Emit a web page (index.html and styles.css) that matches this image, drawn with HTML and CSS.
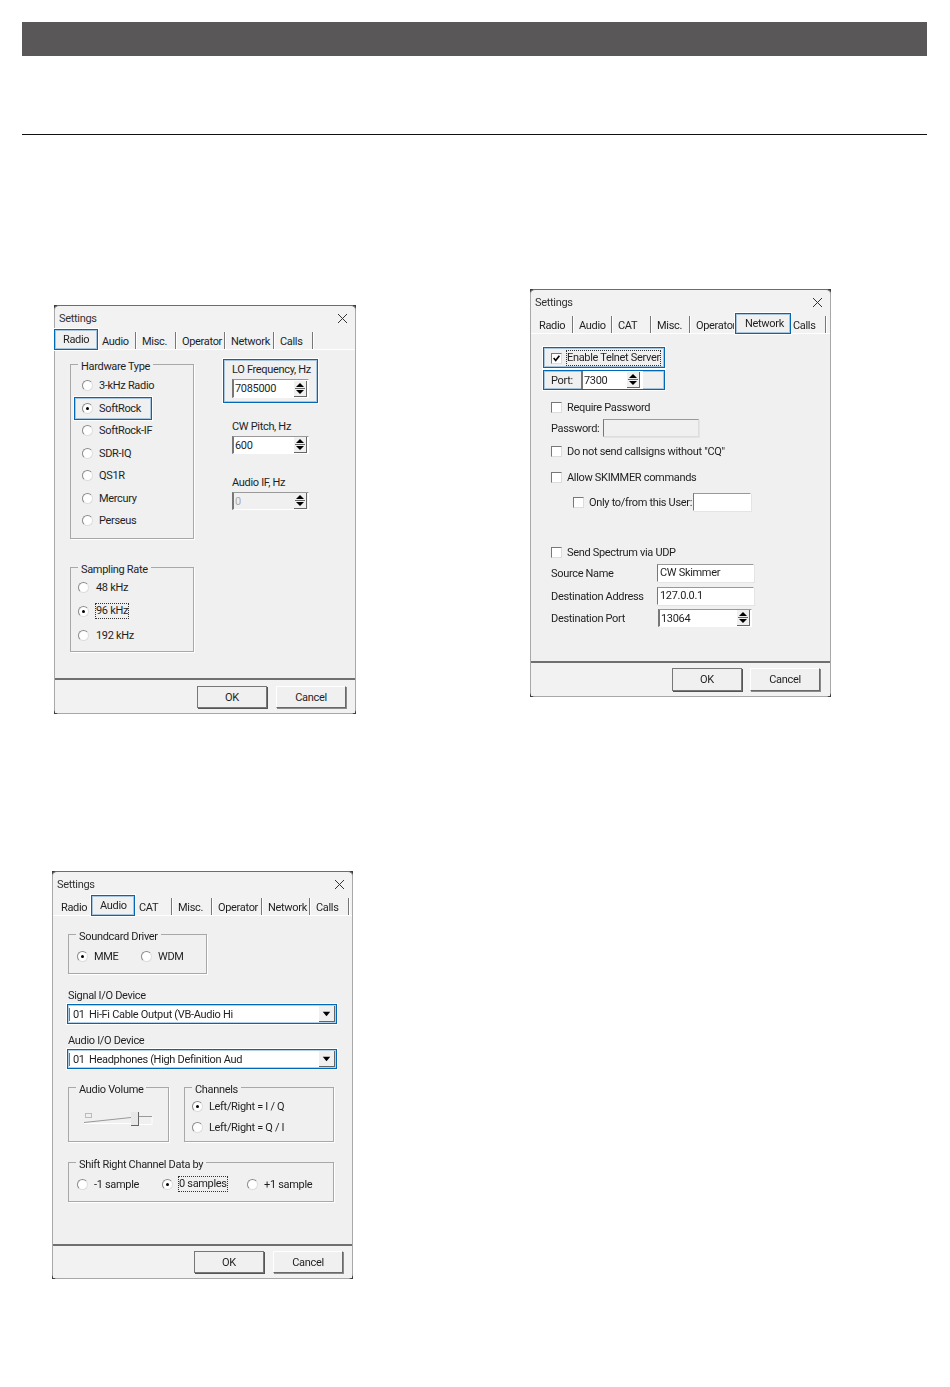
FILE: index.html
```html
<!DOCTYPE html>
<html lang="en">
<head>
    <meta charset="UTF-8">
    <meta name="viewport" content="width=device-width, initial-scale=1.0">
    <title>CW Skimmer Settings</title>
    <link rel="stylesheet" href="styles.css">
</head>
<body>
<svg class="defs" aria-hidden="true">
    <symbol id="updown" viewBox="0 0 12 14">
        <path d="M6 1.5 L10 5.5 H2 Z M2 8.5 H10 L6 12.5 Z" fill="#000"/>
        <path d="M1 7 H11" stroke="#666" stroke-width="1"/>
    </symbol>
    <symbol id="close" viewBox="0 0 11 11">
        <path d="M1 1 L10 10 M10 1 L1 10" stroke="#333" stroke-width="1" fill="none"/>
    </symbol>
    <symbol id="down" viewBox="0 0 16 16">
        <path d="M4 6 H12 L8 11 Z" fill="#000"/>
    </symbol>
</svg>

<div class="page">
    <div class="top-bar"></div>
    <hr class="top-rule">

    <div class="sheets">
        <div class="col">
            <!-- Radio tab -->
            <div class="dialog dialog-radio">
                <div class="dialog-in">
                    <div class="titlebar"><span>Settings</span><svg class="close"><use href="#close"/></svg></div>
                    <div class="tabs tabs-radio">
                        <div class="tab tab-on">Radio</div>
                        <div class="tab tab-next">Audio</div>
                        <div class="tab">Misc.</div>
                        <div class="tab">Operator</div>
                        <div class="tab">Network</div>
                        <div class="tab">Calls</div>
                    </div>
                    <div class="panel panel-radio">
                        <div class="radio-left">
                            <div class="group group-hw">
                                <span class="group-title">Hardware Type</span>
                                <div class="opt"><span class="radio"></span>3-kHz Radio</div>
                                <div class="opt opt-mark"><span class="radio radio-on"></span>SoftRock</div>
                                <div class="opt"><span class="radio"></span>SoftRock-IF</div>
                                <div class="opt"><span class="radio"></span>SDR-IQ</div>
                                <div class="opt"><span class="radio"></span>QS1R</div>
                                <div class="opt"><span class="radio"></span>Mercury</div>
                                <div class="opt"><span class="radio"></span>Perseus</div>
                            </div>
                            <div class="group group-rate">
                                <span class="group-title">Sampling Rate</span>
                                <div class="opt"><span class="radio"></span>48 kHz</div>
                                <div class="opt"><span class="radio radio-on"></span><span class="focus">96 kHz</span></div>
                                <div class="opt"><span class="radio"></span>192 kHz</div>
                            </div>
                        </div>
                        <div class="radio-right">
                            <div class="lo-box">
                                <div class="field-label">LO Frequency, Hz</div>
                                <div class="spin"><span class="spin-val">7085000</span><svg class="spin-btn"><use href="#updown"/></svg></div>
                            </div>
                            <div class="field">
                                <div class="field-label">CW Pitch, Hz</div>
                                <div class="spin spin-short"><span class="spin-val">600</span><svg class="spin-btn"><use href="#updown"/></svg></div>
                            </div>
                            <div class="field field-if">
                                <div class="field-label">Audio IF, Hz</div>
                                <div class="spin spin-short spin-off"><span class="spin-val">0</span><svg class="spin-btn"><use href="#updown"/></svg></div>
                            </div>
                        </div>
                    </div>
                    <div class="foot">
                        <button class="btn btn-default">OK</button>
                        <button class="btn">Cancel</button>
                    </div>
                </div>
            </div>

            <!-- Audio tab -->
            <div class="dialog dialog-audio">
                <div class="dialog-in">
                    <div class="titlebar"><span>Settings</span><svg class="close"><use href="#close"/></svg></div>
                    <div class="tabs tabs-audio">
                        <div class="tab tab-first tab-plain">Radio</div>
                        <div class="tab tab-on">Audio</div>
                        <div class="tab tab-next">CAT</div>
                        <div class="tab">Misc.</div>
                        <div class="tab">Operator</div>
                        <div class="tab">Network</div>
                        <div class="tab">Calls</div>
                    </div>
                    <div class="panel panel-audio">
                        <div class="group group-driver">
                            <span class="group-title">Soundcard Driver</span>
                            <div class="opt opt-wide"><span class="radio radio-on"></span>MME</div>
                            <div class="opt"><span class="radio"></span>WDM</div>
                        </div>
                        <div class="combo-label combo-label-first">Signal I/O Device</div>
                        <div class="combo"><span class="combo-num">01</span><span class="combo-text">Hi-Fi Cable Output (VB-Audio Hi</span><svg class="combo-btn"><use href="#down"/></svg></div>
                        <div class="combo-label">Audio I/O Device</div>
                        <div class="combo"><span class="combo-num">01</span><span class="combo-text">Headphones (High Definition Aud</span><svg class="combo-btn"><use href="#down"/></svg></div>
                        <div class="audio-row">
                            <div class="group group-volume">
                                <span class="group-title">Audio Volume</span>
                                <svg class="slider" viewBox="0 0 70 16">
                                    <path d="M0 11.5 L47 6.5" stroke="#999" fill="none"/>
                                    <path d="M54 5.5 H68 V13.5 H54" stroke="#fff" fill="none"/>
                                    <path d="M54 5.5 H68" stroke="#999" fill="none"/>
                                    <path d="M0 12.5 H47" stroke="#fff" fill="none"/>
                                    <rect x="1.5" y="2.5" width="6" height="4" fill="none" stroke="#bbb"/>
                                    <rect x="47" y="1" width="7" height="14" fill="#e8e8e8"/>
                                    <path d="M47 14.5 H54.5 M54.5 1 V15" stroke="#666" fill="none"/>
                                </svg>
                            </div>
                            <div class="group group-channels">
                                <span class="group-title">Channels</span>
                                <div class="opt"><span class="radio radio-on"></span>Left/Right = I / Q</div>
                                <div class="opt"><span class="radio"></span>Left/Right = Q / I</div>
                            </div>
                        </div>
                        <div class="group group-shift">
                            <span class="group-title">Shift Right Channel Data by</span>
                            <div class="opt opt-shift"><span class="radio"></span>-1 sample</div>
                            <div class="opt opt-shift"><span class="radio radio-on"></span><span class="focus">0 samples</span></div>
                            <div class="opt opt-shift"><span class="radio"></span>+1 sample</div>
                        </div>
                    </div>
                    <div class="foot foot-short">
                        <button class="btn btn-default">OK</button>
                        <button class="btn">Cancel</button>
                    </div>
                </div>
            </div>
        </div>

        <div class="col">
            <!-- Network tab -->
            <div class="dialog dialog-network">
                <div class="dialog-in">
                    <div class="titlebar"><span>Settings</span><svg class="close"><use href="#close"/></svg></div>
                    <div class="tabs tabs-network">
                        <div class="tab tab-first">Radio</div>
                        <div class="tab">Audio</div>
                        <div class="tab">CAT</div>
                        <div class="tab">Misc.</div>
                        <div class="tab tab-clip">Operator</div>
                        <div class="tab tab-on">Network</div>
                        <div class="tab tab-tight">Calls</div>
                    </div>
                    <div class="panel panel-network">
                        <div class="mark-box enable-box">
                            <span class="check check-on"><svg viewBox="0 0 11 11"><path d="M2 5 L4.5 8 L9 2" fill="none" stroke="#000" stroke-width="2"/></svg></span>
                            <span class="focus">Enable Telnet Server</span>
                        </div>
                        <div class="mark-box port-box">
                            <span class="port-label">Port:</span>
                            <div class="spin spin-port"><span class="spin-val">7300</span><svg class="spin-btn"><use href="#updown"/></svg></div>
                        </div>

                        <div class="row row-require"><span class="check"></span>Require Password</div>
                        <div class="row row-pass"><span class="row-label row-label-pass">Password:</span><span class="input input-off input-pass"></span></div>
                        <div class="row row-cq"><span class="check"></span>Do not send callsigns without "CQ"</div>
                        <div class="row row-allow"><span class="check"></span>Allow SKIMMER commands</div>
                        <div class="row row-only"><span class="check"></span><span class="only-label">Only to/from this User:</span><span class="input input-user"></span></div>
                        <div class="row row-udp"><span class="check"></span>Send Spectrum via UDP</div>
                        <div class="row row-source"><span class="row-label">Source Name</span><span class="input input-wide">CW Skimmer</span></div>
                        <div class="row row-dest"><span class="row-label">Destination Address</span><span class="input input-wide">127.0.0.1</span></div>
                        <div class="row row-port"><span class="row-label row-label-port">Destination Port</span><div class="spin spin-dest"><span class="spin-val">13064</span><svg class="spin-btn"><use href="#updown"/></svg></div></div>
                    </div>
                    <div class="foot foot-network">
                        <button class="btn btn-default">OK</button>
                        <button class="btn">Cancel</button>
                    </div>
                </div>
            </div>
        </div>
    </div>
</div>
</body>
</html>
```

FILE: styles.css
```css
:root {
    --face: #f0f0f0;
    --mark: #0068b4;
    --mark-glow: 0 0 0 1px #fff, inset 0 0 0 1px rgba(0, 104, 180, 0.3);
    --ink: #1f1f1f;
    --edge: #a8a8a8;
}

* {
    box-sizing: border-box;
}

body {
    margin: 0;
    background-color: #fff;
    font-family: Roboto, "Liberation Sans", Arial, sans-serif;
    font-size: 11px;
    letter-spacing: -0.32px;
    color: var(--ink);
}

.defs {
    display: none;
}

.page {
    padding: 22px 23px 0 22px;
}

.top-bar {
    height: 34px;
    background-color: #595757;
}

.top-rule {
    height: 1px;
    margin: 78px 0 0;
    border: none;
    background-color: #111;
}

.sheets {
    display: grid;
    grid-template-columns: 508px 1fr;
}

/* dialog window */
.dialog {
    width: 302px;
    height: 409px;
    background-color: #3c3c3c;
    filter: blur(0.2px);
}

.dialog-radio {
    margin: 170px 0 0 32px;
}

.dialog-audio {
    width: 301px;
    height: 408px;
    margin: 157px 0 0 30px;
}

.dialog-network {
    width: 301px;
    height: 408px;
    margin: 154px 0 0 0;
}

.dialog-in {
    display: flex;
    flex-direction: column;
    height: 100%;
    background-color: #f2f2f2;
    border: 1px solid var(--edge);
    border-top-color: #6d6d6d;
    border-radius: 5px;
}

.titlebar {
    display: flex;
    align-items: center;
    justify-content: space-between;
    height: 26px;
    padding: 0 7px 2px 4px;
    color: #333;
}

.close {
    width: 11px;
    height: 11px;
}

/* tabs */
.tabs {
    display: grid;
    height: 17px;
}

.tabs-radio {
    grid-template-columns: 43px 38px 40px 49px 49px 39px;
}

.tabs-audio {
    grid-template-columns: 38px 44px 37px 40px 50px 48px 39px;
}

.tabs-network {
    grid-template-columns: 42px 39px 39px 39px 45px 56px 35px;
}

.tab {
    height: 17px;
    padding-left: 6px;
    line-height: 20px;
    white-space: nowrap;
    border-right: 1px solid #777;
    box-shadow: 1px 0 0 #fff;
}

.tab-first {
    padding-left: 8px;
}

.tab-plain {
    border-right: none;
    box-shadow: none;
}

.tab-next {
    padding-left: 4px;
}

.tab-tight {
    padding-left: 2px;
}

.tab-clip {
    border-right: none;
    box-shadow: none;
}

.tab-on {
    position: relative;
    z-index: 1;
    height: 21px;
    margin-top: -3px;
    padding-left: 8px;
    line-height: 19px;
    background-color: var(--face);
    border: 1px solid var(--mark);
    box-shadow: var(--mark-glow);
}

.tabs-radio .tab-on {
    margin-left: -1px;
}

.tabs-network .tab-on {
    padding-left: 9px;
}

.panel {
    flex: 1;
    background-color: var(--face);
    border-top: 1px solid #fff;
}

/* group boxes */
.group {
    position: relative;
    border: 1px solid var(--edge);
    box-shadow: 1px 1px 0 #fff;
}

.group-title {
    position: absolute;
    top: -4px;
    left: 7px;
    padding: 0 3px;
    background-color: var(--face);
    line-height: 12px;
    white-space: nowrap;
}

.opt {
    display: flex;
    align-items: center;
    gap: 6px;
    white-space: nowrap;
}

.radio {
    flex: none;
    position: relative;
    width: 11px;
    height: 11px;
    border-radius: 50%;
    background-color: #fff;
    border: 1px solid #8a8a8a;
    border-right-color: #ddd;
    border-bottom-color: #ddd;
}

.radio-on::after {
    content: "";
    position: absolute;
    top: 3px;
    left: 3px;
    width: 3px;
    height: 3px;
    border-radius: 50%;
    background-color: #000;
}

.focus {
    padding: 1px 0;
    outline: 1px dotted #333;
    outline-offset: 0;
    line-height: 12px;
    white-space: nowrap;
}

/* radio page */
.panel-radio {
    display: flex;
    padding: 14px 0 0 15px;
}

.group-hw {
    width: 124px;
    height: 175px;
    padding: 9.5px 0 0 11px;
}

.group-hw .opt {
    height: 22.5px;
}

.opt-mark {
    width: 78px;
    margin-left: -8px;
    padding-left: 7px;
    border: 1px solid var(--mark);
    box-shadow: var(--mark-glow);
}

.group-rate {
    width: 124px;
    height: 85px;
    margin-top: 28px;
    padding: 7px 0 0 7px;
}

.group-rate .opt {
    gap: 7px;
    height: 24px;
}

.radio-right {
    margin: -5px 0 0 29px;
}

.lo-box {
    width: 95px;
    height: 44px;
    padding-left: 8px;
    border: 1px solid var(--mark);
    box-shadow: var(--mark-glow);
}

.field {
    margin: 14px 0 0 9px;
}

.field-if {
    margin-top: 19px;
}

.field-label {
    height: 19px;
    line-height: 19px;
    white-space: nowrap;
}

.lo-box .field-label {
    line-height: 20px;
}

.spin {
    display: flex;
    align-items: center;
    justify-content: space-between;
    width: 77px;
    height: 19px;
    padding-right: 1px;
    background-color: #fff;
    border-left: 2px solid #777;
    border-top: 1px solid #999;
    border-right: 1px solid #fff;
    border-bottom: 1px solid #fff;
}

.spin-short {
    height: 18px;
}

.spin-off {
    background-color: var(--face);
    color: #aaa;
}

.spin-val {
    padding-left: 1px;
}

.spin-btn {
    flex: none;
    width: 13px;
    height: 16px;
    background-color: var(--face);
    border-right: 1px solid #666;
    border-bottom: 1px solid #666;
}

/* network page */
.panel-network {
    padding: 13px 0 0 12px;
}

.mark-box {
    display: flex;
    align-items: center;
    width: 122px;
    border: 1px solid var(--mark);
    box-shadow: var(--mark-glow);
}

.enable-box {
    gap: 5px;
    height: 21px;
    padding: 1px 0 0 7px;
}

.port-box {
    height: 20px;
    margin-top: 2px;
    padding-left: 7px;
}

.port-label {
    width: 30px;
}

.spin-port {
    width: 62px;
    height: 18px;
    padding-right: 2px;
    border-top: none;
    border-bottom: none;
}

.check {
    flex: none;
    width: 11px;
    height: 11px;
    background-color: #fff;
    border: 1px solid #777;
    border-right-color: #ddd;
    border-bottom-color: #ddd;
}

.check svg {
    display: block;
    width: 9px;
    height: 9px;
}

.row {
    display: flex;
    align-items: center;
    gap: 5px;
    height: 18px;
    margin-left: 8px;
    white-space: nowrap;
}

.row-require {
    margin-top: 8px;
}

.row-pass {
    margin-top: 3px;
}

.row-cq {
    margin-top: 5px;
}

.row-allow {
    margin-top: 8px;
}

.row-only {
    margin: 7px 0 0 30px;
}

.row-udp {
    margin-top: 32px;
}

.row-source {
    margin-top: 3px;
}

.row-dest {
    margin-top: 5px;
}

.row-port {
    margin-top: 4px;
}

.row-label {
    width: 101px;
}

.row-label-pass {
    width: 47px;
}

.row-label-port {
    width: 102px;
}

.only-label {
    width: 99px;
}

.input {
    height: 18px;
    padding-left: 2px;
    line-height: 16px;
    background-color: #fff;
    border: 1px solid #fff;
    border-left: 1px solid #777;
    border-top: 1px solid #999;
    box-shadow: 1px 1px 0 #e4e4e4;
}

.input-off {
    background-color: var(--face);
    border-right-color: #ddd;
    border-bottom-color: #ddd;
}

.input-pass {
    width: 96px;
}

.input-user {
    width: 58px;
}

.input-wide {
    width: 97px;
}

.spin-dest {
    width: 94px;
    height: 18px;
}

/* audio page */
.panel-audio {
    padding: 18px 0 0 14px;
}

.group-driver {
    display: flex;
    align-items: center;
    width: 139px;
    height: 40px;
    padding: 4px 0 0 8px;
}

.opt-wide {
    width: 64px;
}

.combo-label {
    height: 18px;
    margin-top: 7px;
    line-height: 20px;
}

.combo-label-first {
    margin-top: 12px;
}

.combo {
    display: flex;
    align-items: center;
    width: 270px;
    height: 20px;
    padding-left: 1px;
    background-color: #fff;
    border: 1px solid var(--mark);
    box-shadow: var(--mark-glow);
    white-space: nowrap;
}

.combo-num {
    width: 20px;
    padding-left: 3px;
    border-left: 1px solid #777;
}

.combo-text {
    flex: 1;
}

.combo-btn {
    flex: none;
    width: 16px;
    height: 16px;
    margin-right: 1px;
    background-color: var(--face);
    border-right: 1px solid #666;
    border-bottom: 1px solid #666;
}

.panel-audio .group,
.panel-audio .combo-label {
    margin-left: 1px;
}

.audio-row {
    display: flex;
    gap: 15px;
    margin: 18px 0 0 1px;
}

.audio-row .group {
    margin-left: 0;
}

.group-volume {
    width: 101px;
    height: 55px;
    padding: 23px 0 0 15px;
}

.slider {
    display: block;
    width: 70px;
    height: 16px;
}

.group-channels {
    width: 150px;
    height: 55px;
    padding: 8px 0 0 7px;
}

.group-channels .opt {
    height: 21px;
}

.group-shift {
    display: flex;
    align-items: center;
    width: 266px;
    height: 40px;
    margin-top: 20px;
    padding: 4px 0 0 8px;
}

.opt-shift {
    width: 85px;
}

/* bottom button strip */
.foot {
    display: flex;
    justify-content: flex-end;
    gap: 9px;
    height: 35px;
    padding: 6px 9px 0 0;
    background-color: #f2f2f2;
    border-top: 2px solid #6f6f6f;
}

.foot-short {
    height: 34px;
    padding-top: 5px;
}

.foot-network {
    gap: 8px;
    padding-top: 5px;
    padding-right: 10px;
}

.foot-network .btn {
    height: 23px;
}

.btn {
    width: 70px;
    height: 22px;
    padding: 0;
    background-color: var(--face);
    border: 1px solid #fff;
    border-right-color: #696969;
    border-bottom-color: #696969;
    box-shadow: 1px 1px 0 #8a8a8a;
    font-family: inherit;
    font-size: 11px;
    letter-spacing: inherit;
    color: var(--ink);
}

.btn-default {
    border-color: #777;
    box-shadow: 1px 1px 0 #555;
}
```
